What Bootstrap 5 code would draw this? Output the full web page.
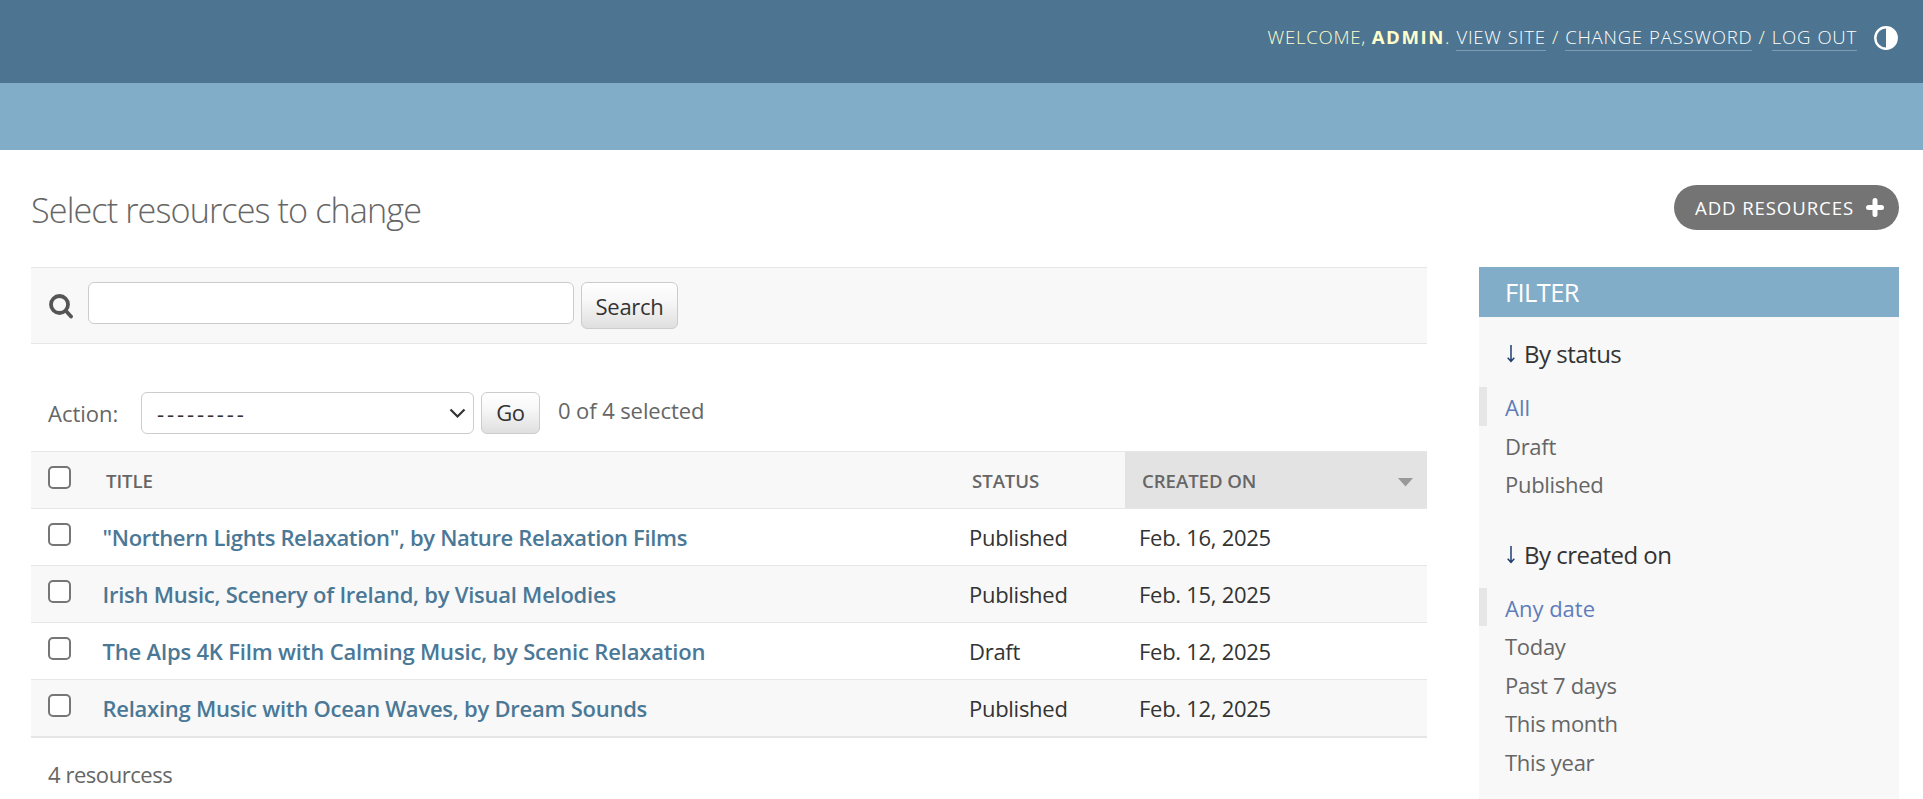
<!DOCTYPE html>
<html lang="en">
<head>
<meta charset="utf-8">
<title>Select resources to change</title>
<link href="https://cdn.jsdelivr.net/npm/bootstrap@5.3.0/dist/css/bootstrap.min.css" rel="stylesheet">
<style>
body{font-family:"Open Sans","Noto Sans",sans-serif;font-size:22px;line-height:38px;color:#333;height:799px;overflow:hidden;letter-spacing:-.3px}
a{text-decoration:none}
.top-bar{height:83px;padding:23px 24px 0 0;background:#4d7591;color:#ffc}
.user-tools{font-size:18.6px;line-height:28px;font-weight:350;white-space:pre;letter-spacing:.75px;word-spacing:.6px}
.user-tools .greet{letter-spacing:.75px;word-spacing:0}
.user-tools b{letter-spacing:1.6px;font-weight:700}
.user-tools a{color:#fff;border-bottom:1px solid #7f9db2;display:inline-block;line-height:26px}
.theme-icon{margin:3px 1px 0 17px}
.crumb-bar{height:67px;background:#82adc8}
.page-body{padding:35px 24px 0 31px}
.page-title{font-size:34.2px;line-height:40px;font-weight:300;color:#666;margin:5px 0 0;letter-spacing:-.9px}
.add-btn{height:45px;width:225px;border-radius:23px;background:#747474;color:#fff;font-size:18.6px;padding:0 15px 0 21px;letter-spacing:.9px}
.columns{display:grid;grid-template-columns:1396px 420px;gap:52px;margin-top:37px}
.search-bar{height:77px;background:#f8f8f8;border:solid #e6e6e6;border-width:1px 0;padding:14px 0 0 17px}
.search-icon{margin-top:12px}
.search-box{width:486px;height:42px;border:1px solid #ccc;border-radius:6px;background:#fff;margin-left:15px}
.grad-btn{border:1px solid #ccc;border-radius:6px;background:linear-gradient(#fff,#f7f7f7 40%,#dfdfdf);color:#333;margin-left:7px;text-align:center}
.search-btn{width:97px;height:47px;line-height:47px}
.go-btn{width:59px;line-height:39px}
.actions{margin-top:48px;height:42px;padding-left:17px;color:#666}
.action-label{width:93px;line-height:43px;letter-spacing:0}
.action-select{width:333px;height:42px;border:1px solid #ccc;border-radius:6px;background:#fff;color:#333;padding:0 7px 0 15px}
.dashes{letter-spacing:2.9px}
.counter{margin-left:18px;line-height:36px;letter-spacing:-.1px}
.result-list{width:1396px;table-layout:fixed;border-collapse:separate;border-spacing:0;margin-top:17px;border-top:1px solid #e6e6e6;border-bottom:1px solid #e6e6e6}
.result-list th,.result-list td{padding:0 0 0 14px;line-height:56px;height:57px;vertical-align:top;border-bottom:1px solid #e6e6e6;white-space:nowrap;letter-spacing:-.28px}
.result-list thead th{background:#f8f8f8;font-size:18.6px;font-weight:600;color:#666;padding-left:17px;letter-spacing:-.05px}
.result-list thead th.name{padding-left:15px}
.result-list td.name{padding-left:11.5px}
.result-list tbody tr:nth-child(even){background:#f8f8f8}
.result-list thead th.sorted{background:#e3e3e3}
.result-list .pick{padding-left:17px!important}
.result-list a{color:#4a7896;font-weight:600;letter-spacing:-.25px}
.result-list tr:nth-child(1) a{letter-spacing:-.34px}
.result-list tr:nth-child(3) a{letter-spacing:-.18px}
.tick{display:block;width:23px;height:23px;border:2px solid #767676;border-radius:5px;background:#fff;margin-top:14px}
.head-text{display:block;height:56px}
.head-text>span,.head-text.plain{padding-top:1px}
.sort-mark{margin:4px 14px 0 0}
.total{padding:17px 0 0 17px;color:#666;letter-spacing:-.45px}
.sidebar{height:532px;background:#f8f8f8}
.filter-title{height:50px;background:#82adc8;color:#fff;font-size:25.5px;line-height:50px;padding-left:26px;margin:0;letter-spacing:-.6px}
.by{font-size:24px;line-height:40px;margin:17px 0 0;padding-left:26px;letter-spacing:-.5px;display:flex;align-items:center}
.by svg{margin:0 9px 0 2px}
.by.later{margin-top:32px}
.choices{margin-top:13px}
.choices a{display:block;color:#666;padding-left:26px;height:38.5px;line-height:40px}
.choices a.on{color:#5f7dba;border-left:8px solid #e6e6e6;padding-left:18px;letter-spacing:0}
</style>
<script src="https://cdn.jsdelivr.net/npm/bootstrap@5.3.0/dist/js/bootstrap.bundle.min.js"></script>
</head>
<body class="bg-white">
<header class="top-bar d-flex justify-content-end align-items-start">
<div class="user-tools"><span class="greet">WELCOME, <b>ADMIN</b>.</span> <a href="#">VIEW SITE</a> / <a href="#">CHANGE PASSWORD</a> / <a href="#">LOG OUT</a></div>
<svg class="theme-icon" width="24" height="24" viewBox="0 0 24 24"><circle cx="12" cy="12" r="10.700" fill="none" stroke="#fff" stroke-width="2.400"/><path d="M12 1a11 11 0 0 1 0 22z" fill="#fff"/></svg>
</header>
<div class="crumb-bar"></div>
<main class="page-body">
<div class="d-flex justify-content-between align-items-start">
<h1 class="page-title">Select resources to change</h1>
<a href="#" class="add-btn d-flex align-items-center justify-content-between"><span>ADD RESOURCES</span><svg width="18" height="19" viewBox="0 0 18 19"><path d="M9 2.500v14M2.500 9.500h13" stroke="#fff" stroke-width="5" stroke-linecap="round"/></svg></a>
</div>
<div class="columns">
<section>
<div class="search-bar d-flex align-items-start">
<svg class="search-icon" width="25" height="26" viewBox="0 0 25 26"><circle cx="11.500" cy="10.500" r="8.500" fill="none" stroke="#555" stroke-width="3.800"/><path d="M18 17l5 5.500" stroke="#555" stroke-width="3.800" stroke-linecap="round"/></svg>
<div class="search-box"></div>
<div class="grad-btn search-btn">Search</div>
</div>
<div class="actions d-flex">
<span class="action-label">Action:</span>
<div class="action-select d-flex align-items-center justify-content-between"><span class="dashes">---------</span><svg width="17" height="11" viewBox="0 0 17 11"><path d="M1.500 1.500l7 7 7-7" fill="none" stroke="#333" stroke-width="2.200"/></svg></div>
<div class="grad-btn go-btn">Go</div>
<span class="counter">0 of 4 selected</span>
</div>
<table class="result-list">
<colgroup><col style="width:60px"><col><col style="width:170px"><col style="width:302px"></colgroup>
<thead><tr><th class="pick"><span class="tick"></span></th><th class="name"><span class="head-text plain">TITLE</span></th><th><span class="head-text plain">STATUS</span></th><th class="sorted"><span class="head-text d-flex justify-content-between align-items-center"><span>CREATED ON</span><svg class="sort-mark" width="15" height="9" viewBox="0 0 15 9"><path d="M0 0h15L7.500 8.500z" fill="#999"/></svg></span></th></tr></thead>
<tbody>
<tr><td class="pick"><span class="tick"></span></td><td class="name"><a href="#">"Northern Lights Relaxation", by Nature Relaxation Films</a></td><td>Published</td><td>Feb. 16, 2025</td></tr>
<tr><td class="pick"><span class="tick"></span></td><td class="name"><a href="#">Irish Music, Scenery of Ireland, by Visual Melodies</a></td><td>Published</td><td>Feb. 15, 2025</td></tr>
<tr><td class="pick"><span class="tick"></span></td><td class="name"><a href="#">The Alps 4K Film with Calming Music, by Scenic Relaxation</a></td><td>Draft</td><td>Feb. 12, 2025</td></tr>
<tr><td class="pick"><span class="tick"></span></td><td class="name"><a href="#">Relaxing Music with Ocean Waves, by Dream Sounds</a></td><td>Published</td><td>Feb. 12, 2025</td></tr>
</tbody>
</table>
<div class="total">4 resourcess</div>
</section>
<aside class="sidebar">
<h2 class="filter-title">FILTER</h2>
<h3 class="by"><svg width="8" height="18" viewBox="0 0 8 18"><path d="M4 0v16M.7 12.700L4 16.300l3.300-3.600" fill="none" stroke="#1f3f70" stroke-width="1.500"/></svg>By status</h3>
<nav class="choices"><a href="#" class="on">All</a><a href="#">Draft</a><a href="#">Published</a></nav>
<h3 class="by later"><svg width="8" height="18" viewBox="0 0 8 18"><path d="M4 0v16M.7 12.700L4 16.300l3.300-3.600" fill="none" stroke="#1f3f70" stroke-width="1.500"/></svg>By created on</h3>
<nav class="choices"><a href="#" class="on">Any date</a><a href="#">Today</a><a href="#">Past 7 days</a><a href="#">This month</a><a href="#">This year</a></nav>
</aside>
</div>
</main>
</body>
</html>
